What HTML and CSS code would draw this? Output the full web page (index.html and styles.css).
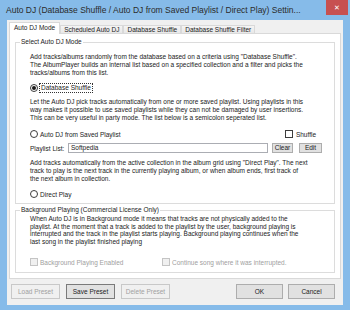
FILE: index.html
```html
<!DOCTYPE html>
<html lang="en">

<head>
    <meta charset="utf-8">
    <title>Auto DJ Settings</title>
    <link rel="stylesheet" href="styles.css">
</head>

<body>
    <div class="window">
        <!--titlebar-->
        <div class="titlebar">
            <span class="title">Auto DJ (Database Shuffle / Auto DJ from Saved Playlist / Direct Play) Settin...</span>
            <span class="close">&#10005;</span>
        </div>

        <div class="dialog">
            <!--tabs-->
            <div class="tabs">
                <span class="tab active">Auto DJ Mode</span>
                <span class="tab">Scheduled Auto DJ</span>
                <span class="tab">Database Shuffle</span>
                <span class="tab">Database Shuffle Filter</span>
            </div>

            <div class="panel">
                <fieldset class="group mode">
                    <legend>Select Auto DJ Mode</legend>
                    <div class="group-body">
                        <p class="info first">Add tracks/albums randomly from the database based on a criteria using "Database Shuffle".<br>The AlbumPlayer builds an internal list based on a specified collection and a filter and picks the<br>tracks/albums from this list.</p>
                        <div class="option">
                            <span class="radio checked"></span>
                            <span class="focus">Database Shuffle</span>
                        </div>

                        <p class="info">Let the Auto DJ pick tracks automatically from one or more saved playlist. Using playlists in this<br>way makes it possible to use saved playlists while they can not be damaged by user insertions.<br>This can be very useful in party mode. The list below is a semicolon seperated list.</p>
                        <div class="option saved">
                            <span class="radio"></span>
                            <span>Auto DJ from Saved Playlist</span>
                            <span class="shuffle"><span class="box"></span>Shuffle</span>
                        </div>
                        <div class="playlist-row">
                            <span class="playlist-label">Playlist List:</span>
                            <span class="input">Softpedia</span>
                            <span class="btn small clear">Clear</span>
                            <span class="btn small edit">Edit</span>
                        </div>

                        <p class="info">Add tracks automatically from the active collection in the album grid using "Direct Play". The next<br>track to play is the next track in the currently playing album, or when album ends, first track of<br>the next album in collection.</p>
                        <div class="option">
                            <span class="radio"></span>
                            <span>Direct Play</span>
                        </div>
                    </div>
                </fieldset>

                <fieldset class="group background">
                    <legend>Background Playing (Commercial License Only)</legend>
                    <div class="group-body">
                        <p class="info tight">When Auto DJ is in Background mode it means that tracks are not physically added to the<br>playlist. At the moment that a track is added to the playlist by the user, background playing is<br>interrupted and the track in the playlist starts playing. Background playing continues when the<br>last song in the playlist finished playing</p>
                        <div class="check-row">
                            <span class="check disabled"><span class="box"></span>Background Playing Enabled</span>
                            <span class="check disabled"><span class="box"></span>Continue song where it was interrupted.</span>
                        </div>
                    </div>
                </fieldset>
            </div>

            <!--knapper i bunden-->
            <div class="buttons">
                <span class="btn disabled">Load Preset</span>
                <span class="btn default">Save Preset</span>
                <span class="btn disabled">Delete Preset</span>
                <span class="btn ok">OK</span>
                <span class="btn">Cancel</span>
            </div>
        </div>
    </div>
</body>

</html>
```

FILE: styles.css
```css
* {
    box-sizing: border-box;
}

body {
    margin: 0;
    font-family: "Liberation Sans", Arial, sans-serif;
    font-size: 6.5px;
    color: #222;
    background: #86bbe9;
}

.window {
    width: 350px;
    height: 310px;
    padding: 0 7px 5px;
    background: #86bbe9;
    display: flex;
    flex-direction: column;
}

/* titlebar */

.titlebar {
    height: 20px;
    margin: 0 -7px;
    padding-left: 6px;
    display: flex;
    align-items: flex-start;
}

.title {
    font-size: 8.5px;
    line-height: 21px;
    color: #2b2b2b;
    white-space: nowrap;
}

.close {
    margin-left: auto;
    margin-right: 2px;
    width: 22px;
    height: 15px;
    background: #c75050;
    color: #fff;
    font-size: 7px;
    line-height: 15px;
    text-align: center;
}

.dialog {
    flex: 1;
    background: #f0f0f0;
    padding: 2px 2px 0;
    display: flex;
    flex-direction: column;
}

/* tabs */

.tabs {
    height: 12px;
    margin-bottom: -1px;
    display: flex;
    align-items: flex-start;
    position: relative;
    z-index: 1;
}

.tab {
    margin-top: 3px;
    height: 8px;
    padding: 0 3px;
    border: 1px solid #d9d9d9;
    border-bottom: none;
    background: linear-gradient(#f4f4f4, #e8e8e8);
    line-height: 7px;
    white-space: nowrap;
}

.tab.active {
    margin-top: 0;
    height: 12px;
    padding: 1px 4px 0;
    background: #fff;
    line-height: 8px;
}

/* tab indhold */

.panel {
    background: #fff;
    border: 1px solid #d9d9d9;
    padding: 0 5px;
}

.group {
    margin: 4px 0 0;
    padding: 0 0 5px 4px;
    border: 1px solid #dcdcdc;
    min-width: 0;
}

.group legend {
    padding: 0 1px;
    line-height: 8px;
}

.group-body {
    padding-left: 10px;
}

.info {
    margin: 6px 0 0;
    line-height: 8px;
    white-space: nowrap;
}

.info.first {
    margin-top: 7px;
}

.info.tight {
    margin-top: 1px;
    line-height: 7.5px;
}

.option {
    margin-top: 7px;
    height: 8px;
    display: flex;
    align-items: center;
    gap: 2px;
}

.option.saved {
    margin-top: 8px;
}

.radio {
    width: 8px;
    height: 8px;
    border: 1px solid #3c3c3c;
    border-radius: 50%;
    background: #fff;
    display: flex;
    align-items: center;
    justify-content: center;
}

.radio.checked::after {
    content: "";
    width: 4px;
    height: 4px;
    border-radius: 50%;
    background: #1a1a1a;
}

.focus {
    outline: 1px dotted #333;
    padding: 0 1px;
    line-height: 8px;
}

.box {
    width: 8px;
    height: 8px;
    border: 1px solid #3c3c3c;
    background: #fff;
    margin-right: 2px;
}

.shuffle {
    margin-left: auto;
    margin-right: 18px;
    display: flex;
    align-items: center;
}

.shuffle .box {
    margin-right: 3px;
}

.playlist-row {
    margin-top: 5px;
    height: 10px;
    display: flex;
    align-items: center;
}

.playlist-label {
    width: 38px;
}

.input {
    width: 200px;
    height: 10px;
    border: 1px solid #abadb3;
    padding: 0 2px;
    line-height: 8px;
}

.btn {
    height: 15px;
    width: 49px;
    border: 1px solid #adadad;
    background: #e1e1e1;
    text-align: center;
    line-height: 13px;
    white-space: nowrap;
}

.btn.small {
    height: 10px;
    line-height: 8px;
}

.clear {
    width: 21px;
    margin-left: 4px;
}

.edit {
    width: 23px;
    margin-left: 6px;
}

.group.background {
    margin: 2px 0 5px;
    padding-bottom: 6px;
}

.check-row {
    margin-top: 13px;
    height: 8px;
    display: flex;
    align-items: center;
}

.check {
    display: flex;
    align-items: center;
}

.check:first-child {
    width: 132px;
}

.check.disabled {
    color: #a0a0a0;
}

.check.disabled .box {
    border-color: #c4c4c4;
    background: #f0f0f0;
}

/* knapper */

.buttons {
    margin-top: 5px;
    padding: 0 6px 0 2px;
    display: flex;
    gap: 6px;
}

.btn.disabled {
    color: #a0a0a0;
    border-color: #c8c8c8;
    background: #f0f0f0;
}

.btn.default {
    border-color: #7a7a7a;
}

.buttons .btn:nth-child(n+4) {
    width: 47px;
}

.btn.ok {
    margin-left: auto;
    margin-right: -1px;
}
```
